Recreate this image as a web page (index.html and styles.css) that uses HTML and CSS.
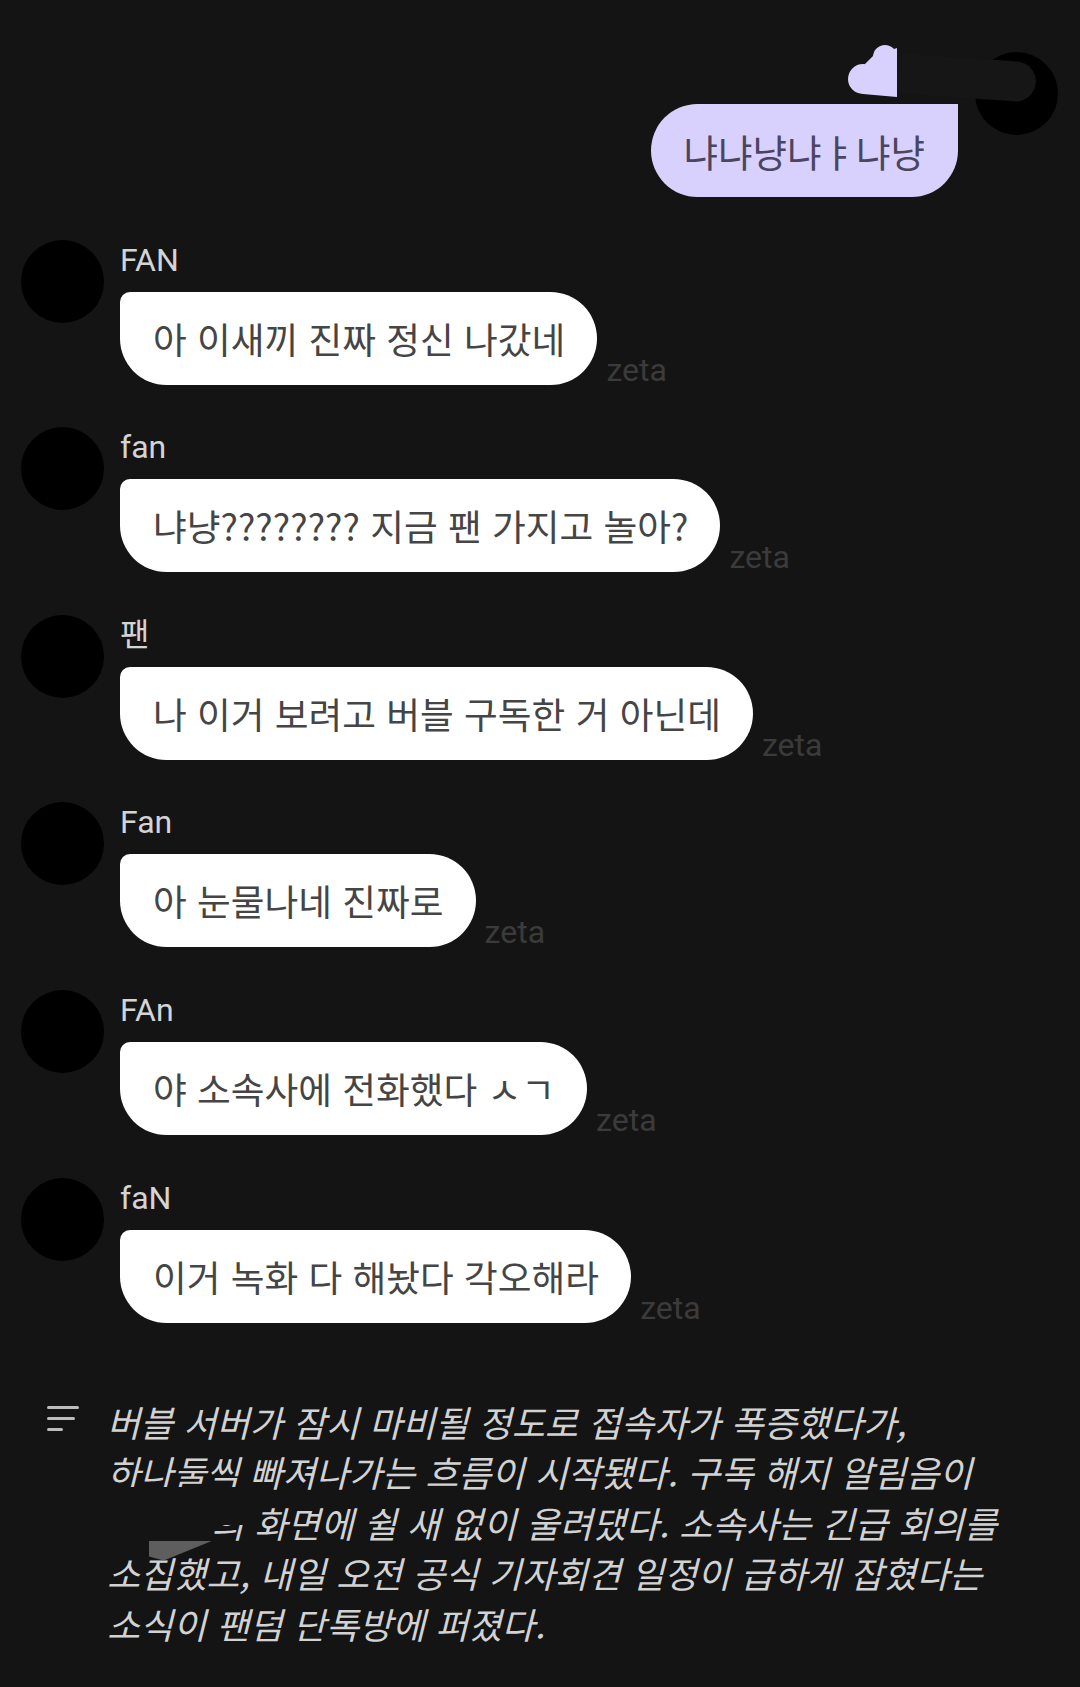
FILE: index.html
```html
<!DOCTYPE html>
<html lang="ko">
<head>
<meta charset="utf-8">
<link rel="stylesheet" href="styles.css">
</head>
<body>
<main class="chat">
  <div class="me">
    <div class="bubble bubble-me">냐냐냥냐ㅑ냐냥</div>
    <svg class="heart" width="60" height="60" viewBox="0 0 60 60">
      <defs><clipPath id="hc"><rect x="0" y="0" width="52" height="60"/></clipPath></defs>
      <g clip-path="url(#hc)" fill="#d9d1fd">
        <circle cx="40" cy="15" r="12"/>
        <circle cx="18" cy="37" r="15"/>
        <polygon points="28,14 52,6 52,55 18,52 6,44 20,22"/>
      </g>
    </svg>
    <div class="me-avatar"></div>
    <div class="smudge"></div>
  </div>

  <div class="msg">
    <div class="avatar"></div>
    <div class="col">
      <div class="name">FAN</div>
      <div class="line"><div class="bubble">아 이새끼 진짜 정신 나갔네</div><span class="zeta">zeta</span></div>
    </div>
  </div>

  <div class="msg">
    <div class="avatar"></div>
    <div class="col">
      <div class="name">fan</div>
      <div class="line"><div class="bubble">냐냥???????? 지금 팬 가지고 놀아?</div><span class="zeta">zeta</span></div>
    </div>
  </div>

  <div class="msg">
    <div class="avatar"></div>
    <div class="col">
      <div class="name">팬</div>
      <div class="line"><div class="bubble">나 이거 보려고 버블 구독한 거 아닌데</div><span class="zeta">zeta</span></div>
    </div>
  </div>

  <div class="msg">
    <div class="avatar"></div>
    <div class="col">
      <div class="name">Fan</div>
      <div class="line"><div class="bubble">아 눈물나네 진짜로</div><span class="zeta">zeta</span></div>
    </div>
  </div>

  <div class="msg">
    <div class="avatar"></div>
    <div class="col">
      <div class="name">FAn</div>
      <div class="line"><div class="bubble">야 소속사에 전화했다 ㅅㄱ</div><span class="zeta">zeta</span></div>
    </div>
  </div>

  <div class="msg">
    <div class="avatar"></div>
    <div class="col">
      <div class="name">faN</div>
      <div class="line"><div class="bubble">이거 녹화 다 해놨다 각오해라</div><span class="zeta">zeta</span></div>
    </div>
  </div>
</main>

<section class="narration">
  <div class="menu-icon"><span class="b1"></span><span class="b2"></span><span class="b3"></span></div>
  <p class="story">버블 서버가 잠시 마비될 정도로 접속자가 폭증했다가,<br>하나둘씩 빠져나가는 흐름이 시작됐다. 구독 해지 알림음이<br><span class="gap"></span>의 화면에 쉴 새 없이 울려댔다. 소속사는 긴급 회의를<br>소집했고, 내일 오전 공식 기자회견 일정이 급하게 잡혔다는<br>소식이 팬덤 단톡방에 퍼졌다.<span class="patch"></span><span class="shard"></span></p>
</section>
</body>
</html>
```

FILE: styles.css
```css
html, body {
  margin: 0;
  padding: 0;
  background: #141414;
}
body {
  width: 1080px;
  height: 1687px;
  overflow: hidden;
  font-family: "Noto Sans CJK KR", "Noto Sans", sans-serif;
}
.chat {
  display: flex;
  flex-direction: column;
  gap: 42.6px;
  padding-top: 104px;
}
.me {
  position: relative;
  display: flex;
  justify-content: flex-end;
  padding-right: 122px;
}
.bubble {
  background: #ffffff;
  color: #454545;
  font-family: "Noto Sans CJK KR", sans-serif;
  font-size: 36.7px;
  line-height: 45px;
  padding: 24px 32px 24px 33px;
  border-radius: 10px 47px 47px 47px;
  white-space: nowrap;
}
.bubble-me {
  background: #d9d1fd;
  color: #4b4560;
  font-size: 37.5px;
  border-radius: 47px 0 47px 47px;
  padding: 24px 33px;
}
.heart {
  position: absolute;
  left: 845px;
  top: -62px;
}
.me-avatar {
  position: absolute;
  left: 975px;
  top: -52px;
  width: 83px;
  height: 83px;
  border-radius: 50%;
  background: #000;
}
.smudge {
  position: absolute;
  left: 898px;
  top: -46px;
  width: 138px;
  height: 40px;
  border-radius: 8px 22px 22px 8px;
  background: #161616;
  transform: rotate(4deg);
}
.msg {
  display: flex;
  align-items: flex-start;
  gap: 16px;
  padding-left: 21px;
}
.avatar {
  flex: none;
  width: 83px;
  height: 83px;
  border-radius: 50%;
  background: #000;
}
.col {
  display: flex;
  flex-direction: column;
  align-items: flex-start;
  padding-top: 2px;
}
.name {
  font-family: Roboto, "Noto Sans CJK KR", sans-serif;
  font-size: 32px;
  line-height: 36px;
  color: #d4d4d4;
}
.line {
  display: flex;
  align-items: flex-end;
  gap: 9px;
  margin-top: 14px;
}
.zeta {
  font-family: Roboto, sans-serif;
  font-size: 32px;
  line-height: 30px;
  color: #3b3b3b;
}
.narration {
  display: flex;
  align-items: flex-start;
  gap: 28px;
  padding-left: 47px;
  margin-top: 73px;
}
.menu-icon {
  flex: none;
  width: 32px;
  display: flex;
  flex-direction: column;
  gap: 8px;
  margin-top: 10px;
}
.menu-icon span {
  display: block;
  height: 3px;
  border-radius: 2px;
  background: #bdbdbd;
}
.menu-icon .b1 { width: 32px; }
.menu-icon .b2 { width: 28px; }
.menu-icon .b3 { width: 16px; }
.story {
  position: relative;
  margin: 0;
  font-family: "Noto Sans CJK KR", sans-serif;
  font-style: italic;
  font-size: 36px;
  line-height: 50.5px;
  color: #d2d2d2;
  white-space: nowrap;
}
.gap {
  display: inline-block;
  width: 104px;
}
.patch {
  position: absolute;
  left: -8px;
  top: 91px;
  width: 150px;
  height: 64px;
  background: #141414;
  clip-path: polygon(0 0, 100% 0, 100% 60%, 76% 60%, 76% 100%, 0 100%);
}
.shard {
  position: absolute;
  left: 42px;
  top: 145px;
  width: 64px;
  height: 20px;
  background: #5e5e5e;
  clip-path: polygon(0 0, 100% 0, 23% 100%, 0 80%);
}
```
